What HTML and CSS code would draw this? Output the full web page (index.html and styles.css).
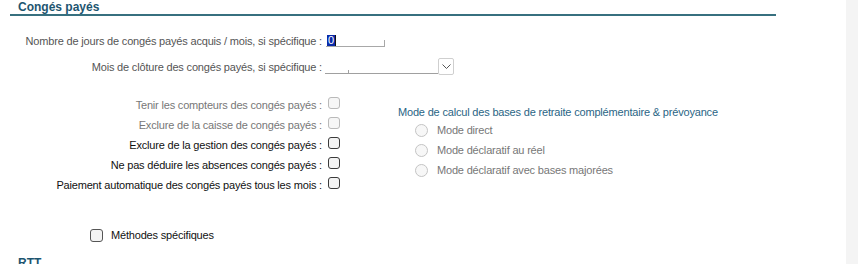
FILE: index.html
```html
<!DOCTYPE html>
<html lang="fr">
<head>
<meta charset="utf-8">
<title>Congés payés</title>
<link rel="stylesheet" href="styles.css">
</head>
<body>
<div class="page">
  <main class="content">
    <h2 class="section-title">Congés payés</h2>

    <div class="fields">
      <div class="row field-row">
        <label class="lbl">Nombre de jours de congés payés acquis / mois, si spécifique :</label>
        <div class="num-input"><span class="sel">0</span></div>
      </div>
      <div class="row field-row">
        <label class="lbl">Mois de clôture des congés payés, si spécifique :</label>
        <div class="select">
          <span class="select-field"></span>
          <span class="select-btn">
            <svg width="9" height="5" viewBox="0 0 9 5"><path d="M0.5 0.5 L4.5 4.5 L8.5 0.5" fill="none" stroke="#555" stroke-width="1"/></svg>
          </span>
        </div>
      </div>
    </div>

    <div class="options">
      <div class="checks">
        <div class="row check-row disabled"><span class="lbl">Tenir les compteurs des congés payés :</span><span class="cb"></span></div>
        <div class="row check-row disabled"><span class="lbl">Exclure de la caisse de congés payés :</span><span class="cb"></span></div>
        <div class="row check-row"><span class="lbl">Exclure de la gestion des congés payés :</span><span class="cb"></span></div>
        <div class="row check-row"><span class="lbl">Ne pas déduire les absences congés payés :</span><span class="cb"></span></div>
        <div class="row check-row"><span class="lbl">Paiement automatique des congés payés tous les mois :</span><span class="cb"></span></div>
      </div>
      <div class="mode">
        <div class="mode-title">Mode de calcul des bases de retraite complémentaire &amp; prévoyance</div>
        <div class="radio"><span class="rb"></span>Mode direct</div>
        <div class="radio"><span class="rb"></span>Mode déclaratif au réel</div>
        <div class="radio"><span class="rb"></span>Mode déclaratif avec bases majorées</div>
      </div>
    </div>

    <div class="methods"><span class="cb"></span><span>Méthodes spécifiques</span></div>

    <h2 class="section-title next">RTT</h2>
  </main>
  <div class="scrollbar"></div>
</div>
</body>
</html>
```

FILE: styles.css
```css
html, body {
  margin: 0;
  padding: 0;
  background: #fff;
  overflow: hidden;
}

body {
  font-family: "Liberation Sans", Arial, sans-serif;
  font-size: 11px;
  letter-spacing: -0.18px;
  color: #555;
}

.page {
  display: flex;
  width: 858px;
  height: 264px;
}

.content {
  flex: 1;
  overflow: hidden;
}

.scrollbar {
  width: 12px;
  background: #f4f4f4;
}

.section-title {
  margin: 0 0 0 10px;
  width: 758px;
  padding-left: 8px;
  font-size: 12px;
  font-weight: bold;
  letter-spacing: 0;
  line-height: 14px;
  height: 14px;
  color: #1d5570;
  border-bottom: 2px solid #37707f;
}

.section-title.next {
  border-bottom: none;
  margin-top: 14px;
}

.fields {
  margin-top: 18px;
  display: flex;
  flex-direction: column;
  gap: 13px;
}

.row {
  display: flex;
  align-items: center;
}

.lbl {
  width: 322px;
  text-align: right;
  flex-shrink: 0;
  white-space: nowrap;
}

.field-row {
  height: 13px;
}

.field-row .lbl {
  color: #555;
  padding-top: 1px;
}

.num-input {
  margin-left: 4px;
  width: 59px;
  height: 13px;
  border-bottom: 1px solid #a8a8a8;
  border-right: 1px solid #a8a8a8;
  box-sizing: border-box;
  position: relative;
  display: flex;
  align-items: center;
}

.num-input::after {
  content: "";
  position: absolute;
  right: -1px;
  top: 0;
  width: 2px;
  height: 6px;
  background: #fff;
}

.sel {
  margin-left: 1px;
  background: #0a2aa8;
  color: #fff;
  font-size: 11px;
  line-height: 11px;
  padding: 0 1px;
  border-right: 1px solid #111;
}

.select {
  margin-left: 3px;
  display: flex;
  align-items: flex-end;
}

.select-field {
  width: 113px;
  height: 8px;
  border-bottom: 1px solid #a0a0a0;
  position: relative;
  box-sizing: border-box;
  margin-bottom: 1px;
}

.select-field::after {
  content: "";
  position: absolute;
  left: 23px;
  bottom: 0;
  width: 1px;
  height: 3px;
  background: #a0a0a0;
}

.select-btn {
  width: 16px;
  height: 17px;
  border: 1px solid #cfcfcf;
  border-radius: 2px;
  box-sizing: border-box;
  display: flex;
  align-items: center;
  justify-content: center;
  background: #fff;
}

.options {
  margin-top: 23px;
  display: flex;
}

.checks {
  display: flex;
  flex-direction: column;
  gap: 7px;
  width: 398px;
}

.check-row {
  height: 13px;
  color: #111;
}

.check-row .lbl {
  padding-top: 4px;
}

.check-row.disabled {
  color: #777;
}

.cb {
  width: 12px;
  height: 12px;
  border: 1px solid #3a3a3a;
  border-radius: 3px;
  background: #f3f3f3;
  box-sizing: border-box;
  flex-shrink: 0;
}

.check-row .cb {
  margin-left: 6px;
}

.check-row.disabled .cb {
  border-color: #b9b9b9;
  background: #f6f6f6;
}

.mode {
  display: flex;
  flex-direction: column;
  padding-top: 9px;
}

.mode-title {
  color: #2a6585;
  line-height: 14px;
  margin-bottom: 1px;
}

.radio {
  display: flex;
  align-items: center;
  height: 20px;
  padding-left: 17px;
  color: #777;
}

.rb {
  width: 13px;
  height: 13px;
  border: 1px solid #c4c4c4;
  border-radius: 50%;
  background: #f7f7f7;
  box-sizing: border-box;
  margin-right: 9px;
}

.methods {
  margin-top: 39px;
  margin-left: 90px;
  display: flex;
  align-items: center;
  gap: 8px;
  color: #111;
  height: 14px;
}

.methods .cb {
  width: 13px;
  height: 13px;
  border-color: #555;
}
```
